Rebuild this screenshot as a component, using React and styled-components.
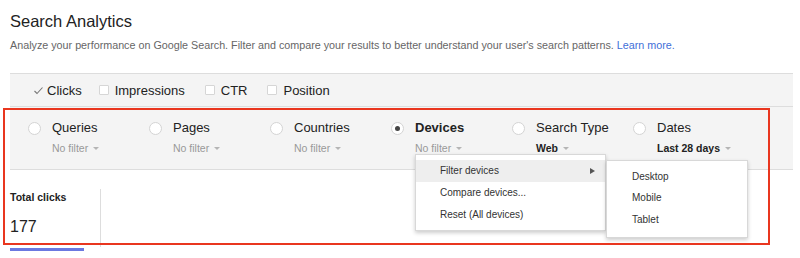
import React from "react";
import styled, { createGlobalStyle } from "styled-components";

const Global = createGlobalStyle`
  html, body { margin: 0; padding: 0; background: #fff; }
  body { font-family: "Liberation Sans", Arial, Helvetica, sans-serif; color: #222; overflow: hidden; }
  * { box-sizing: border-box; }
`;

const Page = styled.div`
  position: relative;
  width: 800px;
  height: 258px;
  padding: 10px 7px 0 10px;
`;

const Title = styled.h1`
  margin: 0;
  font-size: 16.5px;
  line-height: 22px;
  font-weight: normal;
  color: #222;
`;

const Subtitle = styled.p`
  margin: 5px 0 0;
  font-size: 10.75px;
  line-height: 16px;
  color: #666;
`;

const Link = styled.a`
  color: #3f6fd8;
  text-decoration: none;
`;

const MetricsBar = styled.div`
  margin-top: 20px;
  height: 34px;
  display: flex;
  align-items: center;
  padding-left: 23px;
  background: #f4f4f4;
  border-top: 1px solid #ddd;
  border-bottom: 1px solid #ddd;
`;

const Metric = styled.label`
  display: flex;
  align-items: center;
  margin-right: ${(p) => p.$mr}px;
  font-size: 13px;
  color: #222;
`;

const Box = styled.span`
  width: 10px;
  height: 10px;
  margin-right: 6px;
  background: #fff;
  border: 1px solid #d6d6d6;
  border-radius: 1px;
`;

const Check = styled.svg`
  width: 11px;
  height: 11px;
  margin-right: 3px;
`;

const FilterRow = styled.div`
  display: flex;
  padding: 13px 0 14px 18px;
  background: #f4f4f4;
  border-bottom: 1px solid #ddd;
`;

const FilterItem = styled.div`
  width: 121px;
  display: flex;
  align-items: flex-start;
`;

const Radio = styled.span`
  flex: none;
  width: 13px;
  height: 13px;
  margin-top: 2px;
  margin-right: 11px;
  border-radius: 50%;
  background: #fff;
  border: 1px solid #d4d4d4;
  display: flex;
  align-items: center;
  justify-content: center;
  &::after {
    content: "";
    width: 5px;
    height: 5px;
    border-radius: 50%;
    background: ${(p) => (p.$on ? "#444" : "transparent")};
  }
`;

const FilterText = styled.div`
  display: flex;
  flex-direction: column;
`;

const FilterLabel = styled.div`
  font-size: 13px;
  line-height: 16px;
  font-weight: ${(p) => (p.$bold ? "bold" : "normal")};
  color: #222;
  white-space: nowrap;
`;

const FilterValue = styled.div`
  position: relative;
  margin-top: 5px;
  font-size: 10.5px;
  line-height: 14px;
  display: flex;
  align-items: center;
  white-space: nowrap;
  font-weight: ${(p) => (p.$set ? "bold" : "normal")};
  color: ${(p) => (p.$set ? "#222" : "#999")};
  &::after {
    content: "";
    margin-left: 5px;
    margin-top: 1px;
    border-left: 3px solid transparent;
    border-right: 3px solid transparent;
    border-top: 3px solid #b5b5b5;
  }
`;

const Menu = styled.div`
  position: absolute;
  top: calc(100% - 1px);
  left: 0;
  width: 191px;
  padding: 5px 0 4px;
  background: #fff;
  border: 1px solid #d8d8d8;
  box-shadow: 0 2px 4px rgba(0, 0, 0, 0.2);
  font-weight: normal;
  z-index: 5;
`;

const MenuItem = styled.div`
  position: relative;
  height: 22px;
  display: flex;
  align-items: center;
  padding-left: 24px;
  padding-right: 10px;
  font-size: 10px;
  color: #333;
  background: ${(p) => (p.$active ? "#eeeeee" : "transparent")};
`;

const SubArrow = styled.span`
  margin-left: auto;
  border-top: 3px solid transparent;
  border-bottom: 3px solid transparent;
  border-left: 5px solid #555;
`;

const SubMenu = styled.div`
  position: absolute;
  top: 0;
  left: calc(100% + 1px);
  width: 142px;
  padding: 5px 0 6px;
  background: #fff;
  border: 1px solid #d8d8d8;
  box-shadow: 0 2px 4px rgba(0, 0, 0, 0.2);
`;

const SubItem = styled.div`
  height: 21.5px;
  display: flex;
  align-items: center;
  padding-left: 25px;
  font-size: 10px;
  color: #333;
`;

const ChartArea = styled.div`
  display: flex;
  padding-top: 19px;
`;

const TileColumn = styled.div`
  display: flex;
  flex-direction: column;
`;

const Tile = styled.div`
  width: 91px;
  height: 58px;
  padding-top: 1px;
  border-right: 1px solid #ddd;
`;

const TileLabel = styled.div`
  font-size: 10.5px;
  line-height: 14px;
  font-weight: bold;
  color: #222;
`;

const TileValue = styled.div`
  margin-top: 13px;
  font-size: 16px;
  line-height: 20px;
  color: #222;
`;

const TileBar = styled.div`
  margin-top: 1px;
  width: 74px;
  height: 3px;
  background: #6b78e0;
`;

const Highlight = styled.div`
  position: absolute;
  left: 3px;
  top: 108px;
  width: 767px;
  height: 137px;
  border: 2px solid #e9361f;
  pointer-events: none;
  z-index: 10;
`;

const filters = [
  { label: "Queries", value: "No filter" },
  { label: "Pages", value: "No filter" },
  { label: "Countries", value: "No filter" },
  { label: "Devices", value: "No filter", on: true, bold: true, menu: true },
  { label: "Search Type", value: "Web", set: true },
  { label: "Dates", value: "Last 28 days", set: true },
];

export default function App() {
  return (
    <>
      <Global />
      <Page>
        <Title>Search Analytics</Title>
        <Subtitle>
          Analyze your performance on Google Search. Filter and compare your results to better understand your user's search patterns.{" "}
          <Link href="#">Learn more.</Link>
        </Subtitle>
        <MetricsBar>
          <Metric $mr={17}>
            <Check viewBox="0 0 11 11">
              <polyline points="1.5,6 4,8.5 9.5,2.5" fill="none" stroke="#777" strokeWidth="1.1" />
            </Check>
            Clicks
          </Metric>
          <Metric $mr={20}>
            <Box />
            Impressions
          </Metric>
          <Metric $mr={20}>
            <Box />
            CTR
          </Metric>
          <Metric $mr={0}>
            <Box />
            Position
          </Metric>
        </MetricsBar>
        <FilterRow>
          {filters.map((f) => (
            <FilterItem key={f.label}>
              <Radio $on={f.on} />
              <FilterText>
                <FilterLabel $bold={f.bold}>{f.label}</FilterLabel>
                <FilterValue $set={f.set}>
                  {f.value}
                  {f.menu && (
                    <Menu>
                      <MenuItem $active>
                        Filter devices
                        <SubArrow />
                        <SubMenu>
                          <SubItem>Desktop</SubItem>
                          <SubItem>Mobile</SubItem>
                          <SubItem>Tablet</SubItem>
                        </SubMenu>
                      </MenuItem>
                      <MenuItem>Compare devices...</MenuItem>
                      <MenuItem>Reset (All devices)</MenuItem>
                    </Menu>
                  )}
                </FilterValue>
              </FilterText>
            </FilterItem>
          ))}
        </FilterRow>
        <ChartArea>
          <TileColumn>
            <Tile>
              <TileLabel>Total clicks</TileLabel>
              <TileValue>177</TileValue>
            </Tile>
            <TileBar />
          </TileColumn>
        </ChartArea>
        <Highlight />
      </Page>
    </>
  );
}
